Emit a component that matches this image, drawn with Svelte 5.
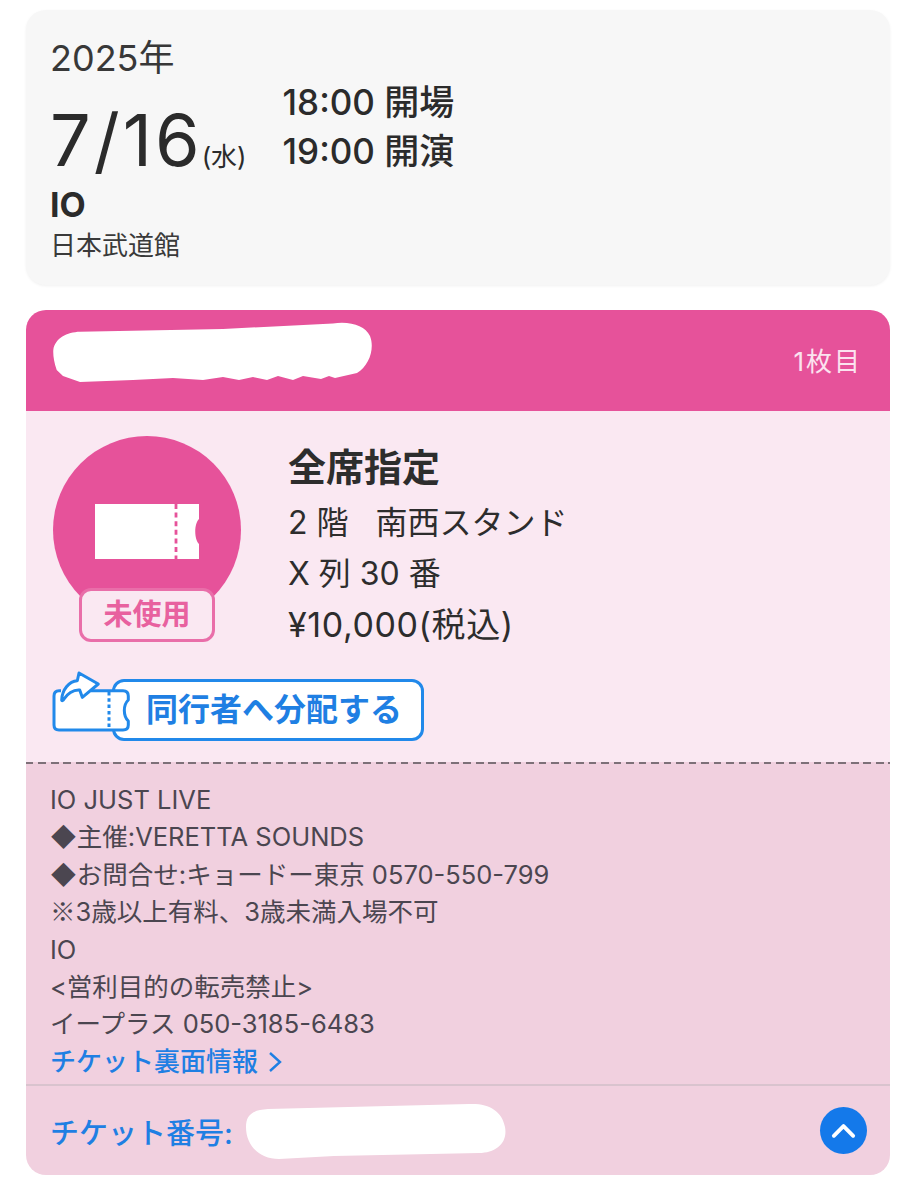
<script>
  const notes = [
    { text: 'IO JUST LIVE' },
    { text: '◆主催:VERETTA SOUNDS' },
    { text: '◆お問合せ:キョードー東京 0570-550-799' },
    { mark: '※', text: '3歳以上有料、3歳未満入場不可' },
    { text: 'IO' },
    { text: '<営利目的の転売禁止>' },
    { text: 'イープラス 050-3185-6483' }
  ];
</script>

<main class="page">
  <section class="event">
    <div class="year">2025年</div>
    <div class="when">
      <div class="date">7/16<span class="dow">(水)</span></div>
      <div class="times">
        <div>18:00 <span class="jp">開場</span></div>
        <div>19:00 <span class="jp">開演</span></div>
      </div>
    </div>
    <div class="artist">IO</div>
    <div class="venue">日本武道館</div>
  </section>

  <section class="ticket">
    <header class="head">
      <svg class="blob" viewBox="0 0 320 60" aria-hidden="true">
        <path d="M0.3 28C2 16 14 10 27 9.7L170 7 280 1.5C298 -1 312 4 317 14 322 27 316 44 304 51L282 56 276 54 268 57 250 54 240 58 225 54 214 58 200 55 186 58 170 55 150 58 120 56 80 58 27 60 10 54 3.7 48C1 40 0 34 0.3 28Z" fill="#fff" />
      </svg>
      <span class="count">1枚目</span>
    </header>

    <div class="main">
      <div class="info">
        <div class="badge">
          <div class="circle">
            <svg class="tk" viewBox="0 0 104 55" aria-hidden="true">
              <path d="M0 0H104V15C99 20 99 35 104 40V55H0Z" fill="#fff" />
              <path d="M81 0V55" stroke="#e6529a" stroke-width="2.8" stroke-dasharray="5 3.6" fill="none" />
            </svg>
          </div>
          <div class="status">未使用</div>
        </div>
        <div class="seat">
          <div class="kind">全席指定</div>
          <div>2 階&nbsp;&nbsp;&nbsp;南西スタンド</div>
          <div>X 列 30 番</div>
          <div class="price">¥10,000(税込)</div>
        </div>
      </div>
      <div class="share">
        <svg class="share-ic" viewBox="0 0 76 60" aria-hidden="true">
          <path d="M8 18.7H6Q1 18.7 1 24V53Q1 58 6 58H70Q75.3 58 75.3 53V49C70 44 70 33 75.3 28V24Q75.3 18.7 70 18.7H38" fill="#fff" stroke="#2189ea" stroke-width="3" stroke-linejoin="round" />
          <path d="M8.7 28C9 18 16 9 24.3 8.7L26 1 45.3 12 29.3 25.3 26.7 18C20 17.5 14 22 11 27 10 29 8.7 29 8.7 28Z" fill="#fff" stroke="#2189ea" stroke-width="3" stroke-linejoin="round" />
          <path d="M56 20V57" stroke="#2189ea" stroke-width="3" stroke-dasharray="3.5 2.8" fill="none" />
        </svg>
        <div class="share-btn">同行者へ分配する</div>
      </div>
    </div>
    <div class="rule"></div>

    <div class="notes">
      {#each notes as n}<div>{#if n.mark}<span class="mark">{n.mark}</span>{/if}{n.text}</div>{/each}
      <div class="link">チケット裏面情報
        <svg class="chev" viewBox="0 0 14 22" aria-hidden="true"><path d="M2 2L12 11 2 20" fill="none" stroke="#1f7fe3" stroke-width="2.4" /></svg>
      </div>
    </div>

    <footer class="foot">
      <span class="num">チケット番号:</span>
      <svg class="blob2" viewBox="0 0 264 56" aria-hidden="true">
        <path d="M2 24C2 12 8 7 24 6L225 1C245 0 258 8 261 24 264 40 252 50 235 50L90 53 35 56C15 56 2 42 2 24Z" fill="#fff" />
      </svg>
      <span class="up">
        <svg viewBox="0 0 28 20" aria-hidden="true"><path d="M4 16L14 6 24 16" fill="none" stroke="#fff" stroke-width="4" stroke-linecap="round" stroke-linejoin="round" /></svg>
      </span>
    </footer>
  </section>
</main>

<style>
  :global(body) {
    margin: 0;
    background: #fff;
  }
  .page {
    width: 919px;
    height: 1200px;
    box-sizing: border-box;
    padding: 10px 29px 0 26px;
    font-family: Inter, "Noto Sans CJK JP", sans-serif;
    color: #2b2b2b;
    overflow: hidden;
  }
  .event {
    height: 275px;
    box-sizing: border-box;
    padding: 26px 24px 0;
    background: #f7f7f7;
    border-radius: 20px;
    box-shadow: 0 1px 3px rgba(0, 0, 0, 0.06);
  }
  .year {
    font-size: 36px;
    line-height: 44px;
    color: #383838;
  }
  .when {
    display: flex;
    align-items: flex-end;
    gap: 36px;
    margin-top: -2px;
  }
  .date {
    font-size: 72px;
    line-height: 76px;
    letter-spacing: 3px;
  }
  .dow {
    font-size: 26px;
    letter-spacing: 0;
    margin-left: -1px;
  }
  .times {
    font-size: 35px;
    line-height: 49px;
    font-weight: 500;
    margin-bottom: 19px;
  }
  .jp {
    font-size: 35px;
    line-height: 1;
  }
  .artist {
    font-size: 34px;
    line-height: 43px;
    font-weight: 700;
    margin-top: -12px;
  }
  .venue {
    font-size: 26px;
    line-height: 40px;
    color: #3a3a3a;
  }
  .ticket {
    margin-top: 25px;
    height: 865px;
    border-radius: 20px;
    overflow: hidden;
    display: flex;
    flex-direction: column;
  }
  .head {
    position: relative;
    height: 101px;
    flex: none;
    background: #e6529a;
    display: flex;
    align-items: center;
    justify-content: flex-end;
    padding-right: 30px;
  }
  .blob {
    position: absolute;
    left: 27px;
    top: 12px;
    width: 320px;
    height: 60px;
  }
  .count {
    font-size: 26px;
    letter-spacing: 2px;
    margin-right: -2px;
    margin-bottom: 2px;
    color: #fbe3ef;
  }
  .main {
    height: 351px;
    flex: none;
    box-sizing: border-box;
    background: #fae8f2;
    padding: 25px 27px 0;
  }
  .rule {
    height: 2px;
    flex: none;
    background: repeating-linear-gradient(90deg, #7d7078 0 7.5px, #f1d0df 7.5px 12.5px);
  }
  .info {
    display: flex;
    gap: 47px;
  }
  .badge {
    width: 188px;
    flex: none;
    display: flex;
    flex-direction: column;
    align-items: center;
  }
  .circle {
    width: 188px;
    height: 188px;
    border-radius: 50%;
    background: #e6529a;
    display: flex;
    align-items: center;
    justify-content: center;
  }
  .tk {
    width: 104px;
    height: 55px;
    margin-bottom: -2px;
  }
  .status {
    width: 136px;
    height: 54px;
    margin-top: -36px;
    box-sizing: border-box;
    position: relative;
    border: 3px solid #e96ea9;
    border-radius: 12px;
    background: #fae8f2;
    color: #e8619f;
    font-size: 29px;
    font-weight: 700;
    line-height: 48px;
    text-align: center;
  }
  .seat {
    font-size: 32px;
    line-height: 51px;
    padding-top: 2px;
    color: #2d2d2d;
  }
  .kind {
    font-size: 38px;
    font-weight: 700;
    line-height: 59px;
  }
  .price {
    font-size: 34px;
    letter-spacing: 0.6px;
  }
  .share {
    display: flex;
    align-items: flex-start;
    margin-top: 29px;
    height: 70px;
  }
  .share-ic {
    width: 76px;
    height: 60px;
    flex: none;
    position: relative;
    z-index: 1;
    margin-top: -7px;
    overflow: visible;
  }
  .share-btn {
    margin-left: -17px;
    width: 312px;
    height: 62px;
    box-sizing: border-box;
    padding-left: 31px;
    border: 3px solid #2189ea;
    border-radius: 12px;
    background: #fff;
    color: #1f7fe3;
    font-size: 32px;
    font-weight: 700;
    line-height: 56px;
  }
  .notes {
    height: 322px;
    flex: none;
    box-sizing: border-box;
    padding: 17px 24px 0;
    background: #f1d0df;
    border-bottom: 2px solid #d9c3ce;
    font-size: 25.5px;
    line-height: 37.4px;
    color: #4b4650;
  }
  .mark {
    font-family: "Noto Sans CJK JP", sans-serif;
    line-height: 1;
  }
  .link {
    color: #1f7fe3;
    display: flex;
    align-items: center;
    gap: 10px;
    font-size: 26px;
    font-weight: 500;
  }
  .chev {
    width: 14px;
    height: 22px;
  }
  .foot {
    position: relative;
    flex: 1;
    background: #f1d0df;
    display: flex;
    align-items: center;
    justify-content: space-between;
    padding: 0 23px 0 24px;
  }
  .num {
    color: #1f7fe3;
    font-size: 29px;
    font-weight: 500;
  }
  .blob2 {
    position: absolute;
    left: 218px;
    top: 17px;
    width: 264px;
    height: 56px;
  }
  .up {
    width: 47px;
    height: 47px;
    border-radius: 50%;
    background: #1479ea;
    display: flex;
    align-items: center;
    justify-content: center;
  }
  .up svg {
    width: 27px;
    height: 20px;
    margin-bottom: 2px;
  }
</style>
